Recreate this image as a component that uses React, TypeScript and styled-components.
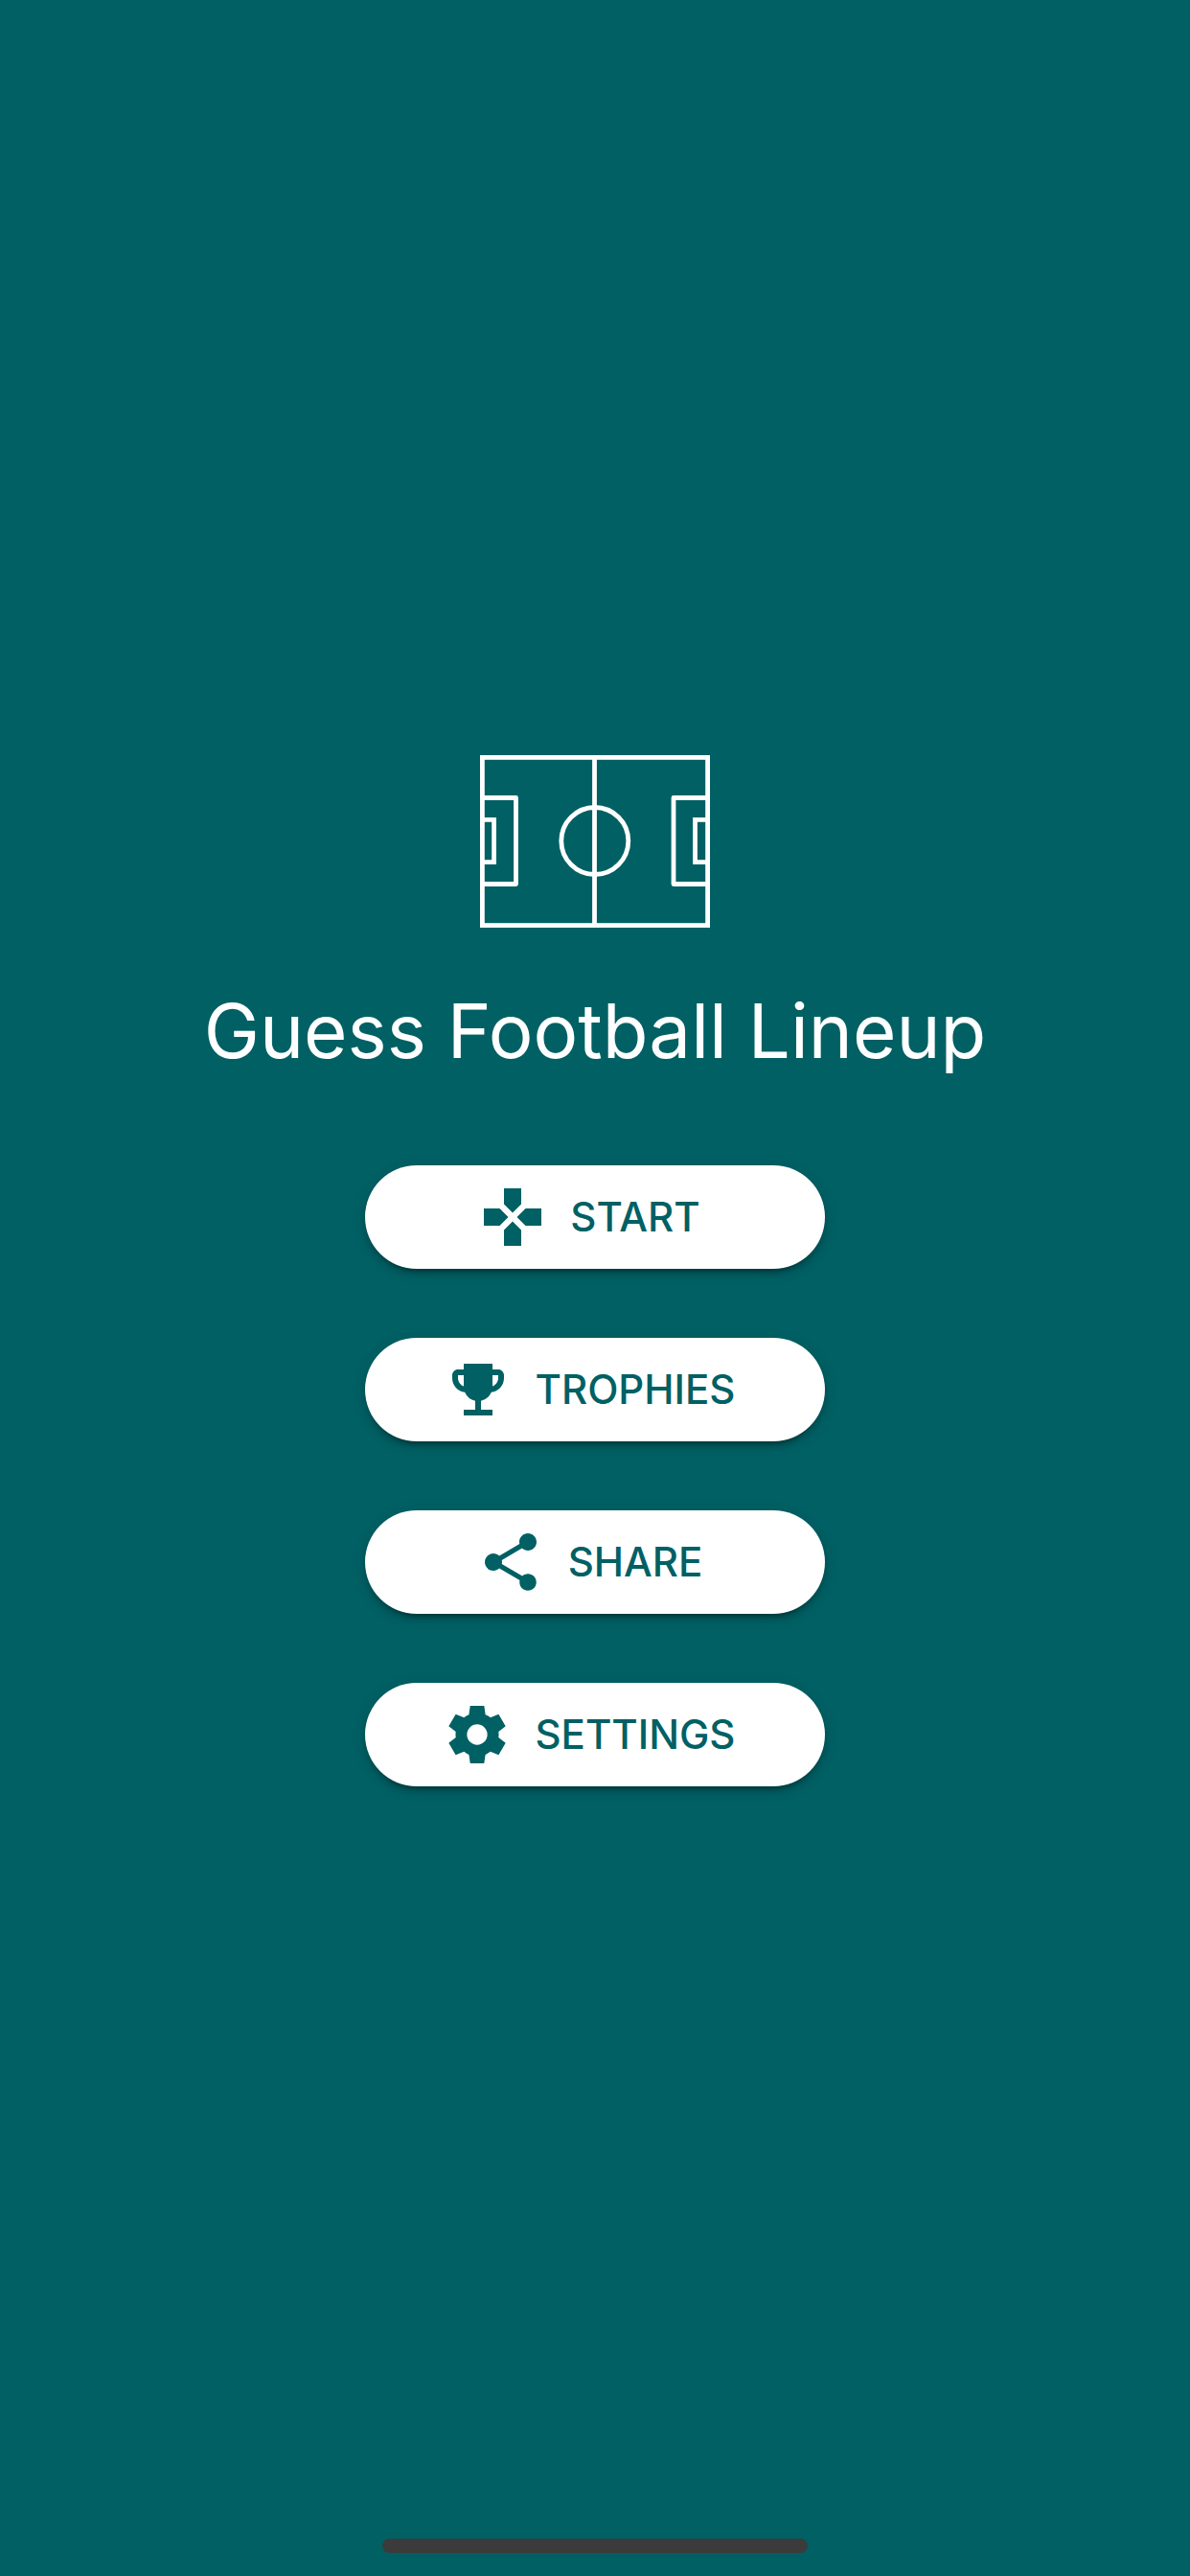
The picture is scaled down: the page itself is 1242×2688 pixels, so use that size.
import React from "react";
import styled, { createGlobalStyle } from "styled-components";
import { MdEmojiEvents, MdGamepad, MdShare } from "react-icons/md";

const teal = "#006064";

const GlobalStyle = createGlobalStyle`
  *, *::before, *::after { box-sizing: border-box; }
  body {
    margin: 0;
    background: ${teal};
    font-family: Inter, "Liberation Sans", sans-serif;
  }
`;

const Screen = styled.main`
  min-height: 100vh;
  display: flex;
  flex-direction: column;
  align-items: center;
  justify-content: center;
  padding-bottom: 36px;
  background: ${teal};
  color: #fff;
`;

const Pitch = styled.svg`
  display: block;
  width: 240px;
  height: 180px;
  fill: none;
  stroke: #fff;
  stroke-width: 4.8;
`;

const Title = styled.h1`
  margin: 60px 0 92px;
  font-size: 78px;
  line-height: 96px;
  font-weight: 400;
  text-align: center;
`;

const Menu = styled.nav`
  display: flex;
  flex-direction: column;
  gap: 72px;
`;

const MenuButton = styled.button`
  display: flex;
  align-items: center;
  justify-content: center;
  gap: 24px;
  width: 480px;
  height: 108px;
  padding: 0 48px 0 36px;
  border: 0;
  border-radius: 54px;
  background: #fff;
  color: ${teal};
  font-family: inherit;
  font-size: 42px;
  line-height: 48px;
  font-weight: 500;
  cursor: pointer;
  box-shadow:
    0 9px 3px -6px rgba(0, 0, 0, 0.2),
    0 6px 6px rgba(0, 0, 0, 0.14),
    0 3px 15px rgba(0, 0, 0, 0.12);

  svg {
    flex: none;
    width: 72px;
    height: 72px;
  }
`;

const HomeIndicator = styled.div`
  position: fixed;
  bottom: 24px;
  left: 50%;
  width: 444px;
  height: 15px;
  margin-left: -222px;
  border-radius: 8px;
  background: #3b3b3b;
`;

function SharpGear() {
  return (
    <svg viewBox="0 0 24 24" fill="currentColor" aria-hidden="true">
      <path
        fillRule="evenodd"
        d="M19.43 13c.05-.33.08-.66.08-1 0-.34-.03-.66-.07-.98l2.45-1.91-2.43-4.22-2.87 1.17c-.52-.4-1.08-.74-1.7-1L14.44 2H9.57l-.44 3.06c-.62.26-1.19.6-1.7 1L4.55 4.89 2.11 9.11l2.45 1.91c-.04.32-.07.64-.07.98 0 .34.03.67.08 1l-2.46 1.91 2.43 4.2 2.88-1.16c.53.41 1.1.75 1.72 1.01L9.58 22h4.85l.44-3.04c.62-.26 1.19-.6 1.72-1.01l2.88 1.16 2.43-4.2zM12 15.55a3.55 3.55 0 1 1 0-7.1 3.55 3.55 0 0 1 0 7.1z"
      />
    </svg>
  );
}

const items = [
  { label: "START", Icon: MdGamepad },
  { label: "TROPHIES", Icon: MdEmojiEvents },
  { label: "SHARE", Icon: MdShare },
  { label: "SETTINGS", Icon: SharpGear },
];

export default function App() {
  return (
    <>
      <GlobalStyle />
      <Screen>
        <Pitch viewBox="0 0 240 180" aria-hidden="true">
          <rect x="2.4" y="2.4" width="235.2" height="175.2" />
          <path d="M119.5 2V178" />
          <circle cx="119.8" cy="89.5" r="35" />
          <path strokeLinejoin="round" d="M2 44.5H37.5V134.5H2M238 44.5H202V134.5H238" />
          <path d="M2 67.3H14.6V111.6H2M238 67.3H224.5V111.6H238" />
        </Pitch>
        <Title>Guess Football Lineup</Title>
        <Menu>
          {items.map(({ label, Icon }) => (
            <MenuButton key={label} type="button">
              <Icon aria-hidden="true" />
              <span>{label}</span>
            </MenuButton>
          ))}
        </Menu>
      </Screen>
      <HomeIndicator />
    </>
  );
}
